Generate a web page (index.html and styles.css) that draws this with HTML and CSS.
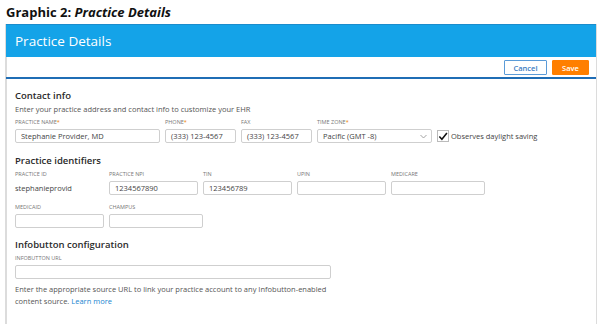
FILE: index.html
```html
<!DOCTYPE html>
<html lang="en">
<head>
  <meta charset="UTF-8" />
  <title>Practice Details</title>
  <link rel="stylesheet" href="styles.css">
</head>
<body>
  <div class="caption">Graphic 2: <em>Practice Details</em></div>

  <div class="panel">
    <div class="panel-header">Practice Details</div>
    <div class="toolbar">
      <button class="btn btn-cancel">Cancel</button>
      <button class="btn btn-save">Save</button>
    </div>

    <div class="content">
      <h2 class="section-title">Contact info</h2>
      <p class="desc">Enter your practice address and contact info to customize your EHR</p>
      <div class="row">
        <div class="field w-name">
          <label>Practice name<span class="req">*</span></label>
          <div class="input">Stephanie Provider, MD</div>
        </div>
        <div class="field w-phone">
          <label>Phone<span class="req">*</span></label>
          <div class="input">(333) 123-4567</div>
        </div>
        <div class="field w-phone">
          <label>Fax</label>
          <div class="input">(333) 123-4567</div>
        </div>
        <div class="field w-tz">
          <label>Time zone<span class="req">*</span></label>
          <div class="input select">Pacific (GMT -8)
            <svg class="chev" width="7" height="5" viewBox="0 0 7 5"><path d="M0.5 1 L3.5 4 L6.5 1" fill="none" stroke="#999" stroke-width="0.9"/></svg>
          </div>
        </div>
        <div class="check">
          <span class="box">
            <svg width="11" height="11" viewBox="0 0 11 11"><path d="M1.5 5.5 L4.3 8.6 L9.8 1.6" fill="none" stroke="#111" stroke-width="1.7"/></svg>
          </span>
          Observes daylight saving
        </div>
      </div>

      <h2 class="section-title">Practice identifiers</h2>
      <div class="row">
        <div class="field w-id">
          <label>Practice ID</label>
          <div class="plain">stephanieprovid</div>
        </div>
        <div class="field w-id">
          <label>Practice NPI</label>
          <div class="input">1234567890</div>
        </div>
        <div class="field w-id">
          <label>TIN</label>
          <div class="input">123456789</div>
        </div>
        <div class="field w-id">
          <label>UPIN</label>
          <div class="input"></div>
        </div>
        <div class="field w-id">
          <label>Medicare</label>
          <div class="input"></div>
        </div>
      </div>
      <div class="row row-next">
        <div class="field w-id">
          <label>Medicaid</label>
          <div class="input"></div>
        </div>
        <div class="field w-id">
          <label>Champus</label>
          <div class="input"></div>
        </div>
      </div>

      <h2 class="section-title">Infobutton configuration</h2>
      <div class="field w-url">
        <label>Infobutton URL</label>
        <div class="input"></div>
      </div>
      <p class="note">Enter the appropriate source URL to link your practice account to any Infobutton-enabled content source. <a href="#">Learn more</a></p>
    </div>
  </div>
</body>
</html>
```

FILE: styles.css
```css
body {
  margin: 0;
  padding: 0;
  background: white;
  font-family: "Open Sans", "Noto Sans", sans-serif;
  color: #333;
}
.caption {
  font-size: 13px;
  font-weight: bold;
  color: #111;
  padding: 2px 6px 0 6px;
  height: 22px;
  line-height: 20px;
}
.caption em {
  font-style: italic;
}
.panel {
  margin: 0 2px 0 5px;
  height: 300px;
  border-left: 2px solid #dcdcdc;
  border-right: 1px solid #dcdcdc;
  box-sizing: border-box;
}
.panel-header {
  background: #14a3e8;
  border-top: 1px solid #1b8ccc;
  margin-left: -1px;
  height: 33px;
  box-sizing: border-box;
  color: white;
  font-size: 13.5px;
  line-height: 32px;
  padding-left: 9px;
}
.toolbar {
  display: flex;
  justify-content: flex-end;
  align-items: center;
  gap: 5px;
  height: 19px;
  padding-right: 7px;
  padding-top: 1px;
  border-bottom: 2px solid #1f6db5;
  margin-left: -1px;
}
.btn {
  font-family: "Open Sans", sans-serif;
  font-size: 7.5px;
  font-weight: 600;
  height: 15px;
  padding: 0;
  border-radius: 1px;
  cursor: pointer;
}
.btn-cancel {
  width: 43px;
  background: white;
  border: 1px solid #5a9bd8;
  color: #3c7dc2;
}
.btn-save {
  width: 37px;
  background: #ff7f00;
  border: 1px solid #ff7f00;
  color: white;
}
.content {
  padding: 10px 8px 0 8px;
}
.section-title {
  margin: 0;
  font-size: 9.5px;
  font-weight: 600;
  color: #2a2a2a;
  line-height: 14px;
}
.desc {
  margin: 0 0 2px 0;
  font-size: 7.5px;
  line-height: 12px;
  color: #555;
}
.row {
  display: flex;
  gap: 5px;
  align-items: flex-end;
}
.row + .section-title {
  margin-top: 11px;
}
.row-next + .section-title {
  margin-top: 10px;
}
.section-title + .row {
  margin-top: 1px;
}
.row-next {
  margin-top: 7px;
}
.field {
  display: flex;
  flex-direction: column;
}
.field label {
  font-size: 5.5px;
  text-transform: uppercase;
  color: #777;
  line-height: 10px;
  margin-bottom: 2px;
}
.req {
  color: #f07c00;
}
.input {
  height: 14px;
  box-sizing: border-box;
  border: 1px solid #cfcfcf;
  border-radius: 2px;
  font-size: 7.5px;
  line-height: 12px;
  padding-left: 5px;
  color: #444;
  position: relative;
}
.plain {
  height: 14px;
  font-size: 7.5px;
  line-height: 14px;
  color: #444;
}
.select .chev {
  position: absolute;
  right: 4px;
  top: 4px;
}
.w-name { width: 145px; }
.w-phone { width: 71px; }
.w-tz { width: 115px; }
.w-id { width: 89px; }
.w-id:last-child { width: 94px; }
.w-url { width: 316px; margin-top: 1px; }
.check {
  display: flex;
  align-items: center;
  gap: 2px;
  height: 14px;
  font-size: 7.5px;
  color: #444;
}
.box {
  width: 12px;
  height: 12px;
  box-sizing: border-box;
  border: 1px solid #bbb;
  display: flex;
  align-items: center;
  justify-content: center;
}
.note {
  margin: 5px 0 0 0;
  font-size: 7.5px;
  line-height: 11.5px;
  color: #555;
  width: 330px;
}
.note a {
  color: #1a86d0;
  text-decoration: none;
}
```
